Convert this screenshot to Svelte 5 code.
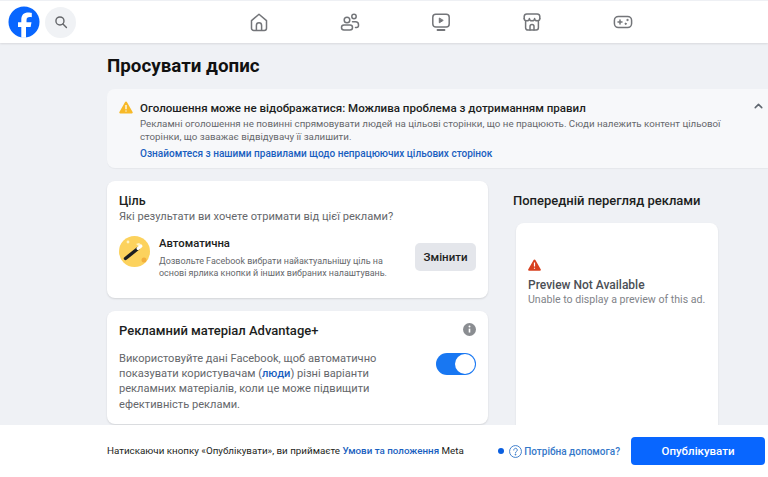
<script>
  const navItems = ['home', 'friends', 'video', 'market', 'game'];
</script>

<div class="page">
  <header class="top">
    <div class="brand">
      <svg class="logo" viewBox="0 0 32 32" width="32" height="32">
        <circle cx="16" cy="16" r="15.5" fill="#0866ff"/>
        <path d="M13.3 31.4V20.9H10v-4.7h3.3v-2.1c0-5.1 2.3-7.5 7.3-7.5.9 0 2.6.2 3.2.4v4.2c-.4 0-1-.1-1.8-.1-2.5 0-3.5 1-3.5 3.4v1.7h5l-.9 4.7H18v10.8c-1.6.3-3.2.2-4.7-.3z" fill="#fff"/>
      </svg>
      <div class="search">
        <svg viewBox="0 0 16 16" width="14" height="14" fill="none" stroke="#65676b" stroke-width="1.6">
          <circle cx="6.8" cy="6.8" r="4.6"/><path d="M10.2 10.2l4 4" stroke-linecap="round"/>
        </svg>
      </div>
    </div>
    <nav class="nav">
      {#each navItems as item}
        <span class="nav-item">
          <svg viewBox="0 0 20 20" width="20" height="20" fill="none" stroke="#737579" stroke-width="1.5" stroke-linecap="round" stroke-linejoin="round">
            {#if item === 'home'}
              <path d="M2.5 8.6 10 2.2l7.5 6.4v7.6a2.2 2.2 0 0 1-2.2 2.2H4.7a2.2 2.2 0 0 1-2.2-2.2z"/>
              <path d="M7.4 18v-4.6a2.6 2.6 0 0 1 5.2 0V18"/>
            {:else if item === 'friends'}
              <circle cx="7" cy="8" r="2.8"/>
              <rect x="1.5" y="13" width="11" height="5" rx="2.5"/>
              <circle cx="14" cy="4.5" r="2.2"/>
              <path d="M12.5 9.8h3a3 3 0 0 1 3 3v.6a2 2 0 0 1-2 2h-1"/>
            {:else if item === 'video'}
              <rect x="1.8" y="2.2" width="16.4" height="12.8" rx="3"/>
              <path d="M8.3 6.4v4.4l3.6-2.2z" fill="#737579" stroke-width="1"/>
              <path d="M6.5 18h7" stroke-width="1.8"/>
            {:else if item === 'market'}
              <path d="M3.6 9.6v6.2a2.2 2.2 0 0 0 2.2 2.2h8.4a2.2 2.2 0 0 0 2.2-2.2V9.6"/>
              <path d="M2.2 6.6V4.4a2.6 2.6 0 0 1 2.6-2.4h10.4a2.6 2.6 0 0 1 2.6 2.4v2.2"/>
              <path d="M2.2 6.4c0 1.3.9 2.4 2.6 2.4 1.4 0 2.6-1 2.6-2.4 0 1.4 1.2 2.4 2.6 2.4s2.6-1 2.6-2.4c0 1.4 1.2 2.4 2.6 2.4 1.7 0 2.6-1.1 2.6-2.4"/>
              <path d="M8 18v-3.6a2 2 0 0 1 4 0V18"/>
            {:else}
              <rect x="1.4" y="4.4" width="17.2" height="11.2" rx="4"/>
              <path d="M5 10h4M7 8v4"/>
              <circle cx="14.4" cy="8" r=".7" fill="#737579" stroke-width=".8"/>
              <circle cx="12.6" cy="11.8" r=".7" fill="#737579" stroke-width=".8"/>
            {/if}
          </svg>
        </span>
      {/each}
    </nav>
  </header>

  <main class="main">
    <h1>Просувати допис</h1>

    <section class="alert">
      <svg class="warn" viewBox="0 0 14 13" width="14" height="13">
        <path d="M7 .6a1 1 0 0 1 .9.5l5.7 10a1 1 0 0 1-.9 1.5H1.3a1 1 0 0 1-.9-1.5l5.7-10A1 1 0 0 1 7 .6z" fill="#f7b928"/>
        <path d="M7 4v4.2M7 9.6v1" stroke="#fff" stroke-width="1.3"/>
      </svg>
      <div class="alert-body">
        <div class="alert-title">Оголошення може не відображатися: Можлива проблема з дотриманням правил</div>
        <p class="alert-text">Рекламні оголошення не повинні спрямовувати людей на цільові сторінки, що не працюють. Сюди належить контент цільової сторінки, що заважає відвідувачу її залишити.</p>
        <span class="alert-link">Ознайомтеся з нашими правилами щодо непрацюючих цільових сторінок</span>
      </div>
      <svg class="chev" viewBox="0 0 10 7" width="9" height="6" fill="none" stroke="#606770" stroke-width="1.8" stroke-linecap="round" stroke-linejoin="round">
        <path d="M1.2 5.4 5 1.6l3.8 3.8"/>
      </svg>
    </section>

    <div class="columns">
      <div class="left">
        <section class="card goal">
          <h2>Ціль</h2>
          <p class="sub">Які результати ви хочете отримати від цієї реклами?</p>
          <div class="goal-row">
            <svg class="wand" viewBox="0 0 31 31" width="31" height="31">
              <circle cx="15.5" cy="15.5" r="15.5" fill="#fcd25d"/>
              <circle cx="25" cy="24" r="2.5" fill="#f2ae3c"/>
              <circle cx="9" cy="6" r="1.4" fill="#fff3c4"/>
              <path d="M17 8l3-1 3 2-1 3z" fill="#fff3c4"/>
              <path d="M6.5 22.5 19 12.5" stroke="#1c1e21" stroke-width="3.4" stroke-linecap="round"/>
              <path d="M19 12.5l3-2.4" stroke="#fff" stroke-width="3" stroke-linecap="round"/>
            </svg>
            <div class="goal-text">
              <div class="goal-name">Автоматична</div>
              <p>Дозвольте Facebook вибрати найактуальнішу ціль на основі ярлика кнопки й інших вибраних налаштувань.</p>
            </div>
            <button class="change">Змінити</button>
          </div>
        </section>

        <section class="card creative">
          <div class="creative-head">
            <h2 class="big">Рекламний матеріал Advantage+</h2>
            <svg viewBox="0 0 12 12" width="13" height="13">
              <circle cx="6" cy="6" r="6" fill="#8a8d91"/>
              <path d="M6 5.2v3.6" stroke="#fff" stroke-width="1.5"/>
              <circle cx="6" cy="3.3" r=".9" fill="#fff"/>
            </svg>
          </div>
          <div class="creative-row">
            <p>Використовуйте дані Facebook, щоб автоматично показувати користувачам (<b>люди</b>) різні варіанти рекламних матеріалів, коли це може підвищити ефективність реклами.</p>
            <span class="toggle"><span class="knob"></span></span>
          </div>
        </section>
      </div>

      <aside class="right">
        <h3>Попередній перегляд реклами</h3>
        <div class="preview">
          <svg viewBox="0 0 13 12" width="13" height="12">
            <path d="M6.5.4a1 1 0 0 1 .9.5l5.3 9.4a1 1 0 0 1-.9 1.4H1.2a1 1 0 0 1-.9-1.4L5.6.9a1 1 0 0 1 .9-.5z" fill="#d8401f"/>
            <path d="M6.5 3.6v4M6.5 8.8v1" stroke="#fff" stroke-width="1.2"/>
          </svg>
          <div class="pv-title">Preview Not Available</div>
          <div class="pv-sub">Unable to display a preview of this ad.</div>
        </div>
      </aside>
    </div>
  </main>

  <footer class="foot">
    <span class="terms">Натискаючи кнопку «Опублікувати», ви приймаєте <b>Умови та положення</b> Meta</span>
    <div class="foot-right">
      <span class="dot"></span>
      <svg viewBox="0 0 14 14" width="13" height="13" fill="none" stroke="#3578c9" stroke-width="1">
        <circle cx="7" cy="7" r="6.4"/>
        <path d="M5.1 5.4a1.9 1.9 0 1 1 2.9 1.6c-.7.4-1 .8-1 1.5" stroke-linecap="round"/>
        <circle cx="7" cy="10.4" r=".5" fill="#3578c9"/>
      </svg>
      <span class="help">Потрібна допомога?</span>
      <button class="publish">Опублікувати</button>
    </div>
  </footer>
</div>

<style>
  :global(body) { margin: 0; background: #eff1f5; }
  .page {
    width: 768px; height: 477px; overflow: hidden; display: flex; flex-direction: column;
    font-family: Roboto, "Noto Sans", sans-serif; color: #1c1e21; background: #eff1f5;
  }
  .top {
    height: 42px; flex: none; margin-top: 1px; background: #fff; display: flex; align-items: center;
    position: relative; box-shadow: 0 1px 2px rgba(0,0,0,.1);
  }
  .brand { display: flex; align-items: center; gap: 5px; padding-left: 8px; width: 232px; box-sizing: border-box; }
  .logo { display: block; }
  .search { width: 31px; height: 31px; border-radius: 50%; background: #f0f2f5; display: flex; align-items: center; justify-content: center; }
  .nav { display: flex; gap: 71px; margin-left: 17px; }
  .nav-item { display: block; height: 20px; }
  .nav-item svg { display: block; }
  .main { flex: 1; min-height: 0; overflow: hidden; padding-left: 107px; }
  h1 { margin: 12px 0 11px; font-size: 18.8px; line-height: 23px; font-weight: 700; color: #111; }
  .alert {
    display: flex; background: #f7f8fa; border-radius: 8px 0 0 8px; height: 79px; box-sizing: border-box;
    padding: 11px 5px 0 12px; box-shadow: 0 1px 1px rgba(0,0,0,.04);
  }
  .warn { flex: none; margin-top: 1px; }
  .alert-body { width: 590px; margin-left: 7px; }
  .alert-title { font-size: 11.55px; line-height: 17px; font-weight: 500; color: #1c1e21; }
  .alert-text { margin: 1px 0 0; font-size: 9.72px; line-height: 12.5px; color: #65676b; }
  .alert-link { display: block; margin-top: 4px; font-size: 10.05px; line-height: 14px; font-weight: 500; color: #1a5fc0; }
  .chev { margin: 3px 0 0 auto; flex: none; }
  .columns { display: flex; margin-top: 13px; }
  .left { width: 381px; flex: none; display: flex; flex-direction: column; gap: 13px; }
  .card { background: #fff; border-radius: 8px; box-shadow: 0 1px 2px rgba(0,0,0,.12); box-sizing: border-box; padding: 0 12px; }
  .goal { height: 117px; padding-top: 11px; }
  h2 { margin: 0; font-size: 12.5px; line-height: 17px; font-weight: 500; color: #1c1e21; }
  h2.big { font-size: 13px; }
  .sub { margin: 0; font-size: 11.1px; line-height: 16px; color: #65676b; }
  .goal-row { display: flex; align-items: flex-start; margin-top: 11px; }
  .wand { flex: none; }
  .goal-text { width: 240px; margin-left: 9px; }
  .goal-name { font-size: 11.3px; line-height: 16px; font-weight: 500; }
  .goal-text p { margin: 3px 0 0; width: 236px; font-size: 8.95px; line-height: 12px; color: #65676b; }
  .change {
    margin-left: auto; margin-top: 7px; width: 61px; height: 28px; border: 0; border-radius: 5px; background: #e4e6eb; padding: 0;
    font: 500 11.5px Roboto, sans-serif; color: #1c1e21;
  }
  .creative { height: 113px; padding-top: 11px; }
  .creative-head { display: flex; justify-content: space-between; align-items: flex-start; }
  .creative-head svg { display: block; margin-top: 1px; }
  .creative-row { display: flex; justify-content: space-between; align-items: flex-start; margin-top: 12px; }
  .creative-row p { margin: 0; width: 265px; font-size: 11.1px; line-height: 15.2px; color: #65676b; }
  .creative-row b { font-weight: 500; color: #1a5fc0; }
  .toggle { display: block; width: 40px; height: 22px; border-radius: 11px; background: #1877f2; position: relative; margin-top: 2px; flex: none; }
  .knob { position: absolute; right: 1px; top: 1px; width: 20px; height: 20px; border-radius: 50%; background: #fff; }
  .right { margin-left: 25px; width: 230px; }
  h3 { margin: 11px 0 0; font-size: 13px; line-height: 17px; font-weight: 500; color: #1c1e21; }
  .preview {
    margin: 14px 0 0 3px; width: 202px; height: 240px; box-sizing: border-box; padding: 36px 12px 0; background: #fff; border-radius: 8px;
    box-shadow: 0 1px 2px rgba(0,0,0,.1);
  }
  .preview svg { display: block; }
  .pv-title { margin-top: 7px; font: 500 12px/15px Roboto, sans-serif; color: #4b4f56; }
  .pv-sub { font: 400 10.6px/14px Roboto, sans-serif; color: #7f8389; }
  .foot { height: 52px; flex: none; background: #fff; position: relative; display: flex; align-items: center; justify-content: space-between; padding: 0 3px 0 107px; box-sizing: border-box; }
  .terms { font-size: 9.8px; color: #1c1e21; margin-top: -1px; }
  .terms b { font-weight: 500; color: #1a5fc0; }
  .foot-right { display: flex; align-items: center; }
  .dot { width: 6px; height: 6px; border-radius: 50%; background: #0a5fe0; margin-right: 5px; }
  .help { margin-left: 2px; font-size: 10px; font-weight: 500; color: #3578c9; }
  .publish {
    margin-left: 11px; width: 134px; height: 28px; border: 0; border-radius: 4px; background: #0866ff; padding: 0;
    font: 500 11.5px Roboto, sans-serif; color: #fff;
  }
</style>
